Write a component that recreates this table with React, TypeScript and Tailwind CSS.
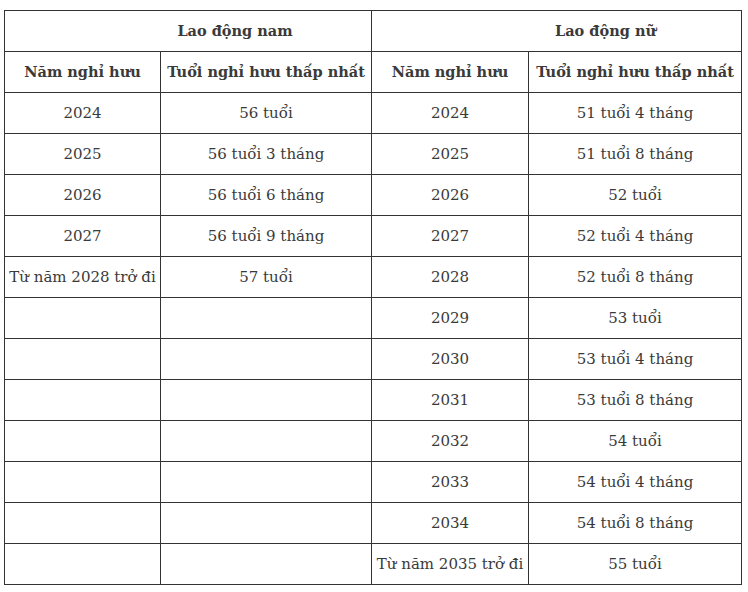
import React from 'react';

const men = [
  ['2024', '56 tuổi'],
  ['2025', '56 tuổi 3 tháng'],
  ['2026', '56 tuổi 6 tháng'],
  ['2027', '56 tuổi 9 tháng'],
  ['Từ năm 2028 trở đi', '57 tuổi'],
];

const women = [
  ['2024', '51 tuổi 4 tháng'],
  ['2025', '51 tuổi 8 tháng'],
  ['2026', '52 tuổi'],
  ['2027', '52 tuổi 4 tháng'],
  ['2028', '52 tuổi 8 tháng'],
  ['2029', '53 tuổi'],
  ['2030', '53 tuổi 4 tháng'],
  ['2031', '53 tuổi 8 tháng'],
  ['2032', '54 tuổi'],
  ['2033', '54 tuổi 4 tháng'],
  ['2034', '54 tuổi 8 tháng'],
  ['Từ năm 2035 trở đi', '55 tuổi'],
];

const cell = 'border border-[#333] h-[41px] p-0 text-center whitespace-nowrap';

export default function App() {
  return (
    <div className="bg-white w-[748px] h-[592px] pt-[10px] pl-[4px]">
      <table
        className="border-collapse table-fixed text-[15px] text-[#3a3a3a]"
        style={{ fontFamily: '"DejaVu Serif", "Liberation Serif", serif' }}
      >
        <colgroup>
          <col className="w-[156px]" />
          <col className="w-[211px]" />
          <col className="w-[157px]" />
          <col className="w-[213px]" />
        </colgroup>
        <thead>
          <tr>
            <th colSpan={2} className={`${cell} pl-[94px] font-bold text-[14.5px]`}>Lao động nam</th>
            <th colSpan={2} className={`${cell} pl-[98px] font-bold text-[14.5px]`}>Lao động nữ</th>
          </tr>
          <tr>
            <th className={`${cell} font-bold text-[14.5px]`}>Năm nghỉ hưu</th>
            <th className={`${cell} font-bold text-[14.5px]`}>Tuổi nghỉ hưu thấp nhất</th>
            <th className={`${cell} font-bold text-[14.5px]`}>Năm nghỉ hưu</th>
            <th className={`${cell} font-bold text-[14.5px]`}>Tuổi nghỉ hưu thấp nhất</th>
          </tr>
        </thead>
        <tbody>
          {women.map((w, i) => (
            <tr key={i}>
              <td className={cell}>{men[i] ? men[i][0] : ''}</td>
              <td className={cell}>{men[i] ? men[i][1] : ''}</td>
              <td className={cell}>{w[0]}</td>
              <td className={cell}>{w[1]}</td>
            </tr>
          ))}
        </tbody>
      </table>
    </div>
  );
}
